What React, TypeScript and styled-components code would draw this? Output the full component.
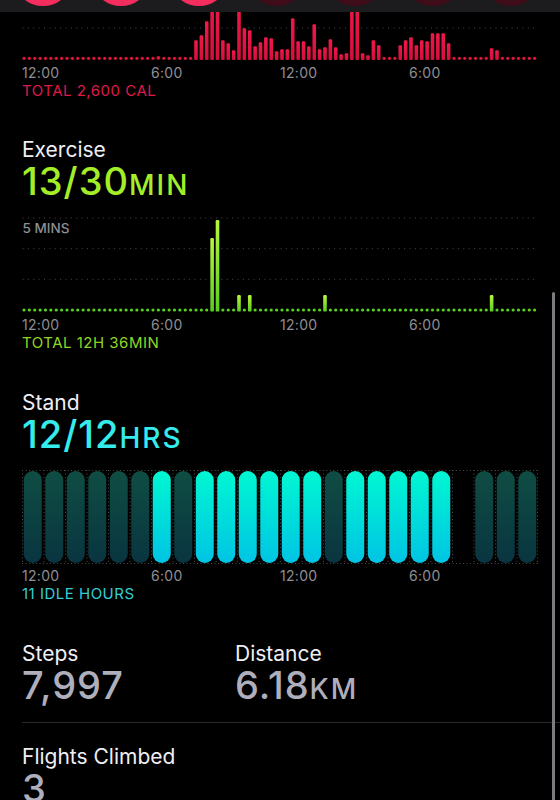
import React from "react";
import styled, { createGlobalStyle } from "styled-components";

const GlobalStyle = createGlobalStyle`
  html, body {
    margin: 0;
    padding: 0;
    background: #000;
    overflow: hidden;
  }
  body {
    font-family: Inter, "Noto Sans", "Liberation Sans", sans-serif;
    -webkit-font-smoothing: antialiased;
  }
`;

const Screen = styled.div`
  position: relative;
  width: 560px;
  height: 800px;
  overflow: hidden;
  background: #000;
`;

const WeekStrip = styled.div`
  height: 12px;
  background: #1c1c1e;
  display: flex;
  align-items: flex-end;
  gap: 18px;
  padding-left: 13px;
  overflow: hidden;
`;

const RingSvg = styled.svg`
  flex-shrink: 0;
  margin-bottom: 6px;
`;

const Content = styled.div`
  padding: 0 22px;
`;

const Section = styled.section<{ $top: number }>`
  margin-top: ${(p) => p.$top}px;
`;

const Title = styled.div`
  font-size: 21px;
  line-height: 25px;
  color: #efeff4;
`;

const Value = styled.div<{ $color: string }>`
  font-size: 38px;
  line-height: 38px;
  font-weight: 500;
  letter-spacing: 1px;
  color: ${(p) => p.$color};
`;

const Unit = styled.span`
  font-size: 28px;
  line-height: 1;
  font-weight: 500;
  letter-spacing: 2px;
`;

const ChartSvg = styled.svg<{ $top: number }>`
  display: block;
  margin-top: ${(p) => p.$top}px;
`;

const AxisRow = styled.div<{ $top: number }>`
  display: grid;
  grid-template-columns: repeat(4, 129px);
  margin-top: ${(p) => p.$top}px;
  font-size: 14px;
  line-height: 16px;
  letter-spacing: 0.3px;
  color: #8e8e93;
`;

const Summary = styled.div<{ $color: string }>`
  margin-top: 1px;
  font-size: 15px;
  line-height: 18px;
  letter-spacing: 0.5px;
  color: ${(p) => p.$color};
  text-transform: uppercase;
`;

const StatGrid = styled.div`
  display: grid;
  grid-template-columns: 213px 1fr;
`;

const Divider = styled.div`
  height: 1px;
  margin: 18px -22px 0 0;
  background: #2a2a2c;
`;

const ScrollThumb = styled.div`
  position: absolute;
  left: 552px;
  top: 292px;
  width: 3px;
  height: 540px;
  border-radius: 2px;
  background: #7c7c80;
`;

const CHART_W = 516;
const SLOT = CHART_W / 96;
const HOUR = CHART_W / 24;

const moveData: Record<number, number> = {
  25: 1.5, 32: 18, 33: 23, 34: 37, 35: 60, 36: 60, 37: 18, 38: 15, 39: 8, 40: 60,
  41: 30, 42: 28, 43: 12, 44: 16, 45: 21, 46: 20, 47: 7, 48: 9, 49: 9, 50: 40,
  51: 17, 52: 17, 53: 12, 54: 34, 55: 9, 56: 11, 57: 19, 58: 11, 59: 4, 60: 5,
  61: 60, 62: 60, 63: 5, 64: 3, 65: 18, 66: 13, 70: 13, 71: 18, 72: 21, 73: 13,
  74: 18, 75: 17, 76: 25, 77: 25, 78: 25, 79: 15, 87: 10, 88: 8,
};

const exerciseData: Record<number, number> = {
  35: 72, 36: 90, 40: 15, 42: 15, 56: 15, 87: 15,
};

// a = stood, d = idle, n = no data
const standHours = "dddddda" + "daaaaaa" + "daaaaa" + "nddd";

const Ring = ({ active }: { active: boolean }) => (
  <RingSvg width="60" height="60" viewBox="0 0 60 60">
    <circle cx="30" cy="30" r="26.5" fill={active ? "#3a0d18" : "#1f0a10"} />
    <circle
      cx="30"
      cy="30"
      r="26.5"
      fill="none"
      stroke={active ? "#f42d5f" : "#3e0d19"}
      strokeWidth="7"
    />
  </RingSvg>
);

const GridLine = ({ y }: { y: number }) => (
  <line
    x1="0.5"
    x2={CHART_W}
    y1={y}
    y2={y}
    stroke="#4a4a4e"
    strokeWidth="1"
    strokeDasharray={`1 ${SLOT - 1}`}
  />
);

interface BarChartProps {
  data: Record<number, number>;
  height: number;
  baseline: number;
  grid: number[];
  gradient: string;
  top: string;
  bottom: string;
  dot: string;
  topMargin: number;
  label?: string;
}

const BarChart = ({ data, height, baseline, grid, gradient, top, bottom, dot, topMargin, label }: BarChartProps) => (
  <ChartSvg width={CHART_W} height={height} $top={topMargin}>
    <defs>
      <linearGradient id={gradient} x1="0" y1="0" x2="0" y2="1">
        <stop offset="0" stopColor={top} />
        <stop offset="1" stopColor={bottom} />
      </linearGradient>
    </defs>
    {grid.map((y) => (
      <GridLine key={y} y={y} />
    ))}
    {label && (
      <text x="0.5" y="16" fontSize="13.5" fontWeight="500" fill="#8e8e93" fontFamily="Inter, sans-serif">
        {label}
      </text>
    )}
    {Array.from({ length: 96 }, (_, i) => {
      const cx = 2 + i * SLOT;
      const h = data[i];
      if (!h || h < 2) {
        return <circle key={i} cx={cx} cy={baseline - (h ? 0.5 : 0)} r={h ? 1.9 : 1.6} fill={dot} />;
      }
      return (
        <rect
          key={i}
          x={cx - 1.8}
          y={baseline - h}
          width="3.6"
          height={h + 1.6}
          rx="1.2"
          fill={`url(#${gradient})`}
        />
      );
    })}
  </ChartSvg>
);

const StandChart = () => (
  <ChartSvg width={CHART_W} height={94} $top={17}>
    <defs>
      <linearGradient id="standOn" x1="0" y1="0" x2="0" y2="1">
        <stop offset="0" stopColor="#00f7d2" />
        <stop offset="1" stopColor="#00c4e4" />
      </linearGradient>
      <linearGradient id="standOff" x1="0" y1="0" x2="0" y2="1">
        <stop offset="0" stopColor="#0f4d43" />
        <stop offset="1" stopColor="#093540" />
      </linearGradient>
    </defs>
    {Array.from({ length: 25 }, (_, i) => (
      <line
        key={`v${i}`}
        x1={Math.min(i * HOUR + 0.5, CHART_W - 0.5)}
        x2={Math.min(i * HOUR + 0.5, CHART_W - 0.5)}
        y1="0"
        y2="94"
        stroke="#4a4a4e"
        strokeWidth="1"
        strokeDasharray="1 2.5"
      />
    ))}
    <line x1="0" x2={CHART_W} y1="0.5" y2="0.5" stroke="#4a4a4e" strokeDasharray="1 2.5" />
    <line x1="0" x2={CHART_W} y1="93.5" y2="93.5" stroke="#4a4a4e" strokeDasharray="1 2.5" />
    {standHours.split("").map((s, i) =>
      s === "n" ? null : (
        <rect
          key={i}
          x={i * HOUR + 1.75}
          y="1"
          width="18"
          height="92"
          rx="9"
          fill={s === "a" ? "url(#standOn)" : "url(#standOff)"}
        />
      )
    )}
  </ChartSvg>
);

const Axis = ({ top }: { top: number }) => (
  <AxisRow $top={top}>
    <span>12:00</span>
    <span>6:00</span>
    <span>12:00</span>
    <span>6:00</span>
  </AxisRow>
);

export default function App() {
  return (
    <Screen>
      <GlobalStyle />
      <WeekStrip>
        {[true, true, true, false, false, false, false].map((a, i) => (
          <Ring key={i} active={a} />
        ))}
      </WeekStrip>
      <Content>
        <BarChart
          data={moveData}
          height={48}
          baseline={46.3}
          grid={[16]}
          gradient="moveGrad"
          top="#f0184a"
          bottom="#d40f3c"
          dot="#e0163f"
          topMargin={0}
        />
        <Axis top={5} />
        <Summary $color="#dc1a4b">Total 2,600 Cal</Summary>

        <Section $top={37}>
          <Title>Exercise</Title>
          <Value $color="#a3ee28">
            13/30<Unit>MIN</Unit>
          </Value>
          <BarChart
            data={exerciseData}
            height={96}
            baseline={93}
            grid={[1, 31.67, 62.33]}
            gradient="exGrad"
            top="#b9f53c"
            bottom="#5acd1e"
            dot="#58d11f"
            topMargin={16.5}
            label="5 MINS"
          />
          <Axis top={4} />
          <Summary $color="#8fd624">Total 12h 36min</Summary>
        </Section>

        <Section $top={38}>
          <Title>Stand</Title>
          <Value $color="#35ecec">
            12/12<Unit>HRS</Unit>
          </Value>
          <StandChart />
          <Axis top={4.5} />
          <Summary $color="#33cfd8">11 Idle Hours</Summary>
        </Section>

        <Section $top={38}>
          <StatGrid>
            <div>
              <Title>Steps</Title>
              <Value $color="#aeaebc">7,997</Value>
            </div>
            <div>
              <Title>Distance</Title>
              <Value $color="#aeaebc">
                6.18<Unit>KM</Unit>
              </Value>
            </div>
          </StatGrid>
          <Divider />
        </Section>

        <Section $top={20.5}>
          <Title>Flights Climbed</Title>
          <Value $color="#aeaebc">3</Value>
        </Section>
      </Content>
      <ScrollThumb />
    </Screen>
  );
}
